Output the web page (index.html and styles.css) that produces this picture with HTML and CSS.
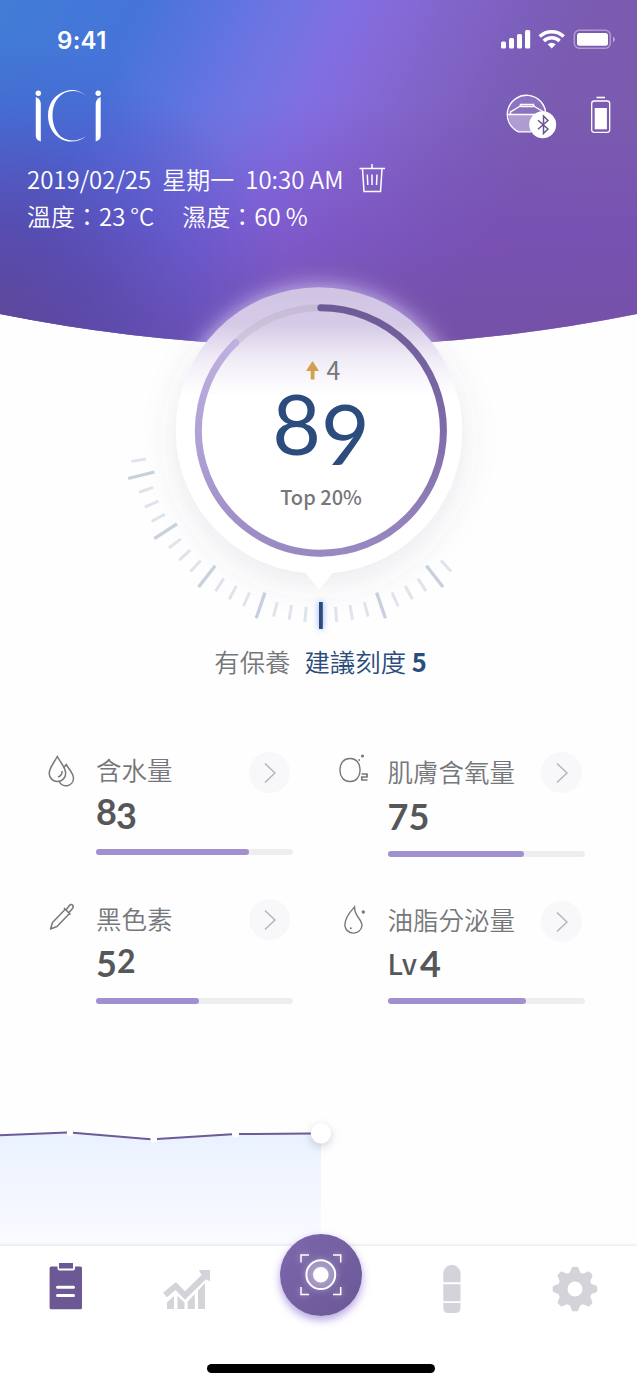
FILE: index.html
```html
<!DOCTYPE html>
<html lang="zh-Hant">
<head>
<meta charset="utf-8">
<title>iCi</title>
<link rel="stylesheet" href="styles.css">
</head>
<body>
<header class="hero">
  <div class="status">
    <span class="clock">9:41</span>
    <svg class="status-icons" width="116" height="22" viewBox="500 28 116 22">
      <g fill="#fff">
        <rect x="501" y="41.5" width="5" height="7" rx="1.5"/><rect x="509" y="38" width="5" height="10.500" rx="1.500"/><rect x="517" y="34" width="5" height="14.500" rx="1.500"/><rect x="525" y="30" width="5.200" height="18.500" rx="1.500"/>
        <path d="M551.700 48.500L547.700 44.300A5.800 5.800 0 0 1 555.700 44.300Z"/>
      </g>
      <g fill="none" stroke="#fff" stroke-width="3.500">
        <path d="M539.700 36.500A17.300 17.300 0 0 1 563.700 36.500M543.800 40.900A11.300 11.300 0 0 1 559.600 40.900"/>
      </g>
      <rect x="574.300" y="30.300" width="36" height="18" rx="5" fill="none" stroke="#fff" stroke-opacity=".4" stroke-width="1.500"/>
      <rect x="577" y="33" width="31" height="12.800" rx="2.500" fill="#fff"/>
      <path d="M613 36.500Q614.800 37.500 614.800 39.300T613 42.200Z" fill="#fff" fill-opacity=".5"/>
    </svg>
  </div>
  <div class="brand">
    <svg class="logo" width="68" height="54" viewBox="34 89 68 54">
      <g fill="#fff">
        <circle cx="38.300" cy="93.200" r="2.700"/><circle cx="98.200" cy="93.200" r="2.700"/>
        <path d="M35.800 97Q40.800 99 40.800 104V141.500Q35.800 140 35.800 136Z"/>
        <path d="M100.700 97Q95.700 99 95.700 104V141.500Q100.700 140 100.700 136Z"/>
        <path d="M86.500 96C79 89.500 71 89 66 91C54.500 94 48 104 48 115.500C48 127 54.500 138 66 141C73 142.500 80.500 141 86.300 136C80 140.200 74 141.200 67.500 139.800C58 137.500 52.500 127 52.500 115.500C52.500 104 58 94.500 67.500 91.800C74 90 80.500 91.500 86.500 96Z"/>
      </g>
    </svg>
    <svg class="device" width="106" height="46" viewBox="505 94 106 46">
      <path d="M508.500 114.500H544V132H518Q509 126 508.500 114.500Z" fill="#fff" fill-opacity=".4"/>
      <path d="M508 114A18.500 18.500 0 0 1 545 114Z" fill="#fff" fill-opacity=".14"/>
      <g fill="none" stroke="#fff" stroke-width="1.400">
        <path d="M531 131.900H518.500A19.200 19.200 0 1 1 545.700 113.500"/>
        <path d="M507.500 114.500H535M510.500 114V112L519.500 106.500Q520.500 106 520.500 104.500H533.500Q533.500 106 534.500 106.500L543.500 112M520.500 106.500H533.500"/>
      </g>
      <circle cx="542.700" cy="124.800" r="13.500" fill="#fff"/>
      <path d="M538 120.200L548 129L543.500 133.500V116L548 120.500L538 129.300" fill="none" stroke="#67558f" stroke-width="1.500"/>
      <path d="M596.500 97.500H605" stroke="#fff" stroke-width="1.600"/>
      <rect x="591.700" y="101" width="18" height="31.300" rx="2.500" fill="none" stroke="#fff" stroke-width="1.300"/>
      <rect x="594.700" y="108" width="12.200" height="21.300" fill="#fff"/>
    </svg>
  </div>
  <div class="info">
    <span>2019/02/25</span><span class="day">星期一</span><span class="hour">10:30 AM</span>
    <svg class="trash" width="28" height="30" viewBox="358 163 28 30" fill="none" stroke="#fff" stroke-width="1.500">
      <path d="M359.500 168.500H385M372 164V168M362.500 169L364 191.500H380.500L382 169M367.300 174.500L367.800 185M372 174.500V185M377 174.500L376.500 185"/>
    </svg>
  </div>
  <div class="info climate"><span>溫度：23<i class="thin"></i>°C</span><span class="humid">濕度：60<i class="thin"></i>%</span></div>
</header>

<main>
<section class="gauge">
  <svg class="dial" width="637" height="380" viewBox="0 260 637 380">
    <defs>
      <linearGradient id="face" gradientUnits="userSpaceOnUse" x1="0" y1="287" x2="0" y2="395">
        <stop offset="0" stop-color="#d0c3e3"/><stop offset=".35" stop-color="#d5cbe7"/><stop offset=".68" stop-color="#f1edf7"/><stop offset="1" stop-color="#fff"/>
      </linearGradient>
      <linearGradient id="right" gradientUnits="userSpaceOnUse" x1="0" y1="308" x2="0" y2="553">
        <stop offset="0" stop-color="#6d5b98"/><stop offset=".5" stop-color="#7f6ba9"/><stop offset="1" stop-color="#9a89c1"/>
      </linearGradient>
      <linearGradient id="left" gradientUnits="userSpaceOnUse" x1="0" y1="340" x2="0" y2="553">
        <stop offset="0" stop-color="#beb0e0"/><stop offset=".5" stop-color="#afa0d5"/><stop offset="1" stop-color="#9a89c1"/>
      </linearGradient>
      <linearGradient id="track" gradientUnits="userSpaceOnUse" x1="0" y1="304" x2="0" y2="345">
        <stop offset="0" stop-color="#c5bad7"/><stop offset="1" stop-color="#d0cadb"/>
      </linearGradient>
      <filter id="soft" x="-40%" y="-40%" width="180%" height="180%"><feGaussianBlur stdDeviation="17"/></filter>
      <filter id="halo" x="-40%" y="-40%" width="180%" height="180%"><feGaussianBlur stdDeviation="11"/></filter>
      <clipPath id="above"><path d="M0 260H637V314Q318.500 378 0 314Z"/></clipPath>
      <g id="minor"><path d="M320.800 607.500V622.500" stroke="#dfe4ec" stroke-width="3"/></g>
      <g id="major"><path d="M320.800 602V629" stroke="#c7d0dd" stroke-width="3.300"/></g>
      <g id="three"><use href="#minor" transform="rotate(4.750 320.800 430.500)"/><use href="#minor" transform="rotate(9.500 320.800 430.500)"/><use href="#minor" transform="rotate(14.250 320.800 430.500)"/></g>
    </defs>
    <circle cx="319" cy="440" r="143" fill="#555a80" fill-opacity=".12" filter="url(#soft)"/>
    <g clip-path="url(#above)"><circle cx="319" cy="430.500" r="145" fill="#e2d4ff" fill-opacity=".75" filter="url(#halo)"/></g>
    <path d="M303 570H335L319.300 590Z" fill="#fff"/>
    <circle cx="319" cy="430.500" r="143.300" fill="url(#face)"/>
    <g fill="none" stroke-width="7">
      <path d="M235.700 342.400A122.500 122.500 0 0 1 320.800 307.800" stroke="url(#track)"/>
      <path d="M320.800 307.800A122.700 122.700 0 0 1 320.800 553.200" stroke="url(#right)" stroke-linecap="round"/>
      <path d="M321.300 553.200A122.700 122.700 0 0 1 235.700 342.400" stroke="url(#left)"/>
    </g>
    <circle cx="235.700" cy="342.400" r="3.500" fill="#beb0e0"/>
    <use href="#three" transform="rotate(-38 320.800 430.500)"/>
    <use href="#three" transform="rotate(-19 320.800 430.500)"/>
    <use href="#three"/>
    <use href="#three" transform="rotate(19 320.800 430.500)"/>
    <use href="#three" transform="rotate(38 320.800 430.500)"/>
    <use href="#three" transform="rotate(57 320.800 430.500)"/>
    <use href="#minor" transform="rotate(-42.750 320.800 430.500)"/>
    <use href="#major" transform="rotate(-38 320.800 430.500)"/>
    <use href="#major" transform="rotate(-19 320.800 430.500)"/>
    <use href="#major" transform="rotate(19 320.800 430.500)"/>
    <use href="#major" transform="rotate(38 320.800 430.500)"/>
    <use href="#major" transform="rotate(57 320.800 430.500)"/>
    <use href="#major" transform="rotate(76 320.800 430.500)"/>
    <use href="#minor" transform="rotate(80.750 320.800 430.500)"/>
    <rect class="mark" x="319" y="602" width="3.800" height="27" fill="#2a4b7c"/>
  </svg>
  <div class="score">
    <div class="delta">
      <svg width="13" height="19" viewBox="0 0 13 19"><path d="M6.500 0L13 10H8.500V18.500H4.700V10H0Z" fill="#d0a04f"/></svg>
      <span>4</span>
    </div>
    <div class="total"><span>8</span><span class="drop">9</span></div>
    <div class="rank">Top 20%</div>
  </div>
</section>

<p class="advice"><span>有保養</span><span class="tip">建議刻度 <b>5</b></span></p>

<section class="metrics">
  <article class="metric">
    <svg class="icon" width="28" height="34" viewBox="48 754 28 34" fill="none" stroke="#77787b" stroke-width="1.500">
      <path d="M57.300 756.500C61 763 65.700 768 65.700 773.300A8.200 8.200 0 0 1 49.200 773.300C49.200 768 53.800 763 57.300 756.500Z"/>
      <path d="M64 767.500L66.200 764.500C69.500 770 73.500 773.500 73.500 778.300A7.500 7.500 0 0 1 59 781M62.200 771C62.200 774.500 60.500 776.200 58 777"/>
    </svg>
    <div class="body">
      <div class="head"><h2>含水量</h2><button class="go"><svg width="12" height="22" viewBox="0 0 12 22"><path d="M1 1.500L11 11L1 20.500"/></svg></button></div>
      <div class="value v83"><span>8</span><span class="low">3</span></div>
      <div class="bar"><div class="fill" style="width:77.600%"></div></div>
    </div>
  </article>
  <article class="metric right">
    <svg class="icon wide" width="32" height="34" viewBox="338 752 32 34" fill="none" stroke="#77787b" stroke-width="1.400">
      <rect x="340" y="758.500" width="20" height="23" rx="9.500" ry="10.500"/>
      <path d="M361.500 774H367V777H361.800V780H367.500" stroke-width="1.700"/>
      <circle cx="362.500" cy="756" r="1.600" fill="#77787b" stroke="none"/><circle cx="359.200" cy="760" r=".9" fill="#77787b" stroke="none"/>
    </svg>
    <div class="body">
      <div class="head"><h2>肌膚含氧量</h2><button class="go"><svg width="12" height="22" viewBox="0 0 12 22"><path d="M1 1.500L11 11L1 20.500"/></svg></button></div>
      <div class="value v75"><span>7</span><span>5</span></div>
      <div class="bar"><div class="fill" style="width:69%"></div></div>
    </div>
  </article>
  <article class="metric second">
    <svg class="icon" width="28" height="34" viewBox="48 900 28 34" fill="none" stroke="#77787b" stroke-width="1.500" stroke-linejoin="round">
      <path d="M65 909.500L52.500 922.500L50.500 929L57 926.500L69.500 913.500M64 908L70.500 914.500M66 910L69 906Q71 903.500 72.500 905T72.500 908.500L69 912.500"/>
    </svg>
    <div class="body">
      <div class="head"><h2>黑色素</h2><button class="go"><svg width="12" height="22" viewBox="0 0 12 22"><path d="M1 1.500L11 11L1 20.500"/></svg></button></div>
      <div class="value v52"><span>5</span><span class="small">2</span></div>
      <div class="bar"><div class="fill" style="width:52.500%"></div></div>
    </div>
  </article>
  <article class="metric right second">
    <svg class="icon wide" width="32" height="34" viewBox="338 902 32 34" fill="none" stroke="#77787b" stroke-width="1.400">
      <path d="M354.500 906C353 908 344.800 915 344.800 924.500A8.700 8.700 0 0 0 362 925C362 917.500 354.500 916 354.500 906Z"/>
      <circle cx="363.300" cy="911" r="1.700" fill="#77787b" stroke="none"/><circle cx="350.800" cy="927.300" r="1" fill="#77787b" stroke="none"/>
    </svg>
    <div class="body">
      <div class="head"><h2>油脂分泌量</h2><button class="go"><svg width="12" height="22" viewBox="0 0 12 22"><path d="M1 1.500L11 11L1 20.500"/></svg></button></div>
      <div class="value v4"><span class="lv">Lv</span><span>4</span></div>
      <div class="bar"><div class="fill" style="width:70%"></div></div>
    </div>
  </article>
</section>

<svg class="trend" width="637" height="135" viewBox="0 1111 637 135">
  <defs><linearGradient id="area" x1="0" y1="0" x2="0" y2="1"><stop offset="0" stop-color="#eaf1ff"/><stop offset="1" stop-color="#fafbff"/></linearGradient></defs>
  <path d="M0 1135L70 1132.300L153 1139L235 1134L321 1133V1246H0Z" fill="url(#area)"/>
  <g fill="#fff"><circle cx="70" cy="1133" r="3.500"/><circle cx="153.500" cy="1139" r="3.500"/><circle cx="235.500" cy="1134" r="3.500"/></g>
  <path d="M0 1135.300L67 1132.400M73 1132.700L150.500 1139.200M157 1139L232 1134.200M239 1134L312 1133.500" stroke="#6d5a98" stroke-width="2" fill="none"/>
  <circle class="point" cx="321" cy="1133.300" r="10.200" fill="#fff"/>
</svg>
</main>

<nav class="tabs">
  <svg class="tab report" width="34" height="48" viewBox="49 1262 34 48">
    <rect x="49.600" y="1266.500" width="32.400" height="42.700" rx="1.500" fill="#6b5895"/>
    <path d="M57.500 1263H75V1268.500Q75 1270.500 73 1270.500H59.500Q57.500 1270.500 57.500 1268.500Z" fill="#fff"/>
    <rect x="59" y="1263" width="14" height="5.500" fill="#6b5895"/>
    <path d="M57.500 1287.200H73.500M57.500 1295.500H73.500" stroke="#fff" stroke-width="3" stroke-linecap="round"/>
  </svg>
  <svg class="tab stats" width="48" height="42" viewBox="163 1269 48 42" fill="#d4d3d9">
    <path d="M167 1309V1302.500L174 1296V1309ZM177.500 1309V1296L184.500 1302.500V1309ZM187.700 1309V1301.500L194.800 1294V1309ZM198 1309V1290.500L205 1283V1309Z"/>
    <path d="M165 1295L175.700 1286L185 1295.500L206 1275" fill="none" stroke="#d4d3d9" stroke-width="6"/>
    <path d="M199 1270H210V1281.500L206.500 1279.500L200.500 1273.500Z"/>
  </svg>
  <button class="scan">
    <svg width="42" height="42" viewBox="0 0 42 42" fill="none" stroke="#fff" stroke-width="1.500">
      <circle cx="20.800" cy="20.700" r="14.400" fill="#fff" fill-opacity=".18" stroke-width="2"/><circle cx="20.800" cy="20.700" r="7" fill="#fff"/>
      <path d="M1 8.500V.9H9M33 .9H40.700V8.500M40.700 33V40.600H33M9 40.600H1V33"/>
    </svg>
  </button>
  <svg class="tab stick" width="18" height="48" viewBox="0 0 18 48" fill="#d4d3d9"><path d="M.3 17.300V8.500A8.600 8.600 0 0 1 17.500 8.500V17.300ZM.3 19.200H17.500V36.200H.3ZM.3 38H17.500V43Q17.500 48 12.500 48H5.300Q.3 48 .3 43Z"/></svg>
  <svg class="tab gear" width="46" height="46" viewBox="-23 -23 46 46">
    <g fill="#d4d3d9">
      <path fill-rule="evenodd" d="M0-17A17 17 0 1 0 0 17A17 17 0 1 0 0-17ZM0-7.500A7.500 7.500 0 1 1 0 7.500A7.500 7.500 0 1 1 0-7.500Z"/>
      <g id="teeth"><path d="M-7.500-14.500Q-5-15.500-4-19.500Q-3.200-22.300-2-22.300H2Q3.200-22.300 4-19.500Q5-15.500 7.500-14.500ZM-7.500 14.500Q-5 15.500-4 19.500Q-3.200 22.300-2 22.300H2Q3.200 22.300 4 19.500Q5 15.500 7.500 14.500Z"/></g>
      <use href="#teeth" transform="rotate(45)"/><use href="#teeth" transform="rotate(90)"/><use href="#teeth" transform="rotate(135)"/>
    </g>
  </svg>
  <div class="home"></div>
</nav>
</body>
</html>
```

FILE: styles.css
```css
* { box-sizing: border-box; }

body {
  margin: 0;
  width: 637px;
  height: 1382px;
  overflow: hidden;
  background: #fefefe;
  font-family: "Noto Sans CJK TC", sans-serif;
  color: #76777a;
}

svg { display: block; flex: none; }
button { border: 0; padding: 0; }

.hero {
  height: 346px;
  color: #fff;
  clip-path: path("M0 0H637V314Q318.500 378 0 314Z");
  background:
    radial-gradient(ellipse 330px 310px at -30px 345px, rgba(94, 70, 146, .95), rgba(86, 68, 164, .72) 38%, rgba(76, 72, 190, .32) 70%, rgba(76, 72, 190, 0)),
    linear-gradient(180deg, rgba(118, 68, 184, 0) 30%, rgba(118, 68, 184, .42) 68%, rgba(116, 78, 164, .8) 100%),
    linear-gradient(115deg, #407cd6 0%, #4674d9 18%, #5d74df 28%, #7274e3 37%, #806fe2 44%, #8569d8 50%, #8265ca 57%, #7b5eb9 68%, #7a5bb0 76%, #7a5cac 100%);
}

.status {
  display: flex;
  justify-content: space-between;
  padding: 28px 21px 0 57px;
  height: 88px;
}
.clock { font: 600 24px/25px Inter, sans-serif; letter-spacing: .3px; }

.brand { display: flex; justify-content: space-between; height: 74px; padding: 1px 26px 0 34px; }
.device { margin-top: 5px; }

.info { display: flex; height: 34px; padding-left: 27px; font-size: 24px; line-height: 34px; font-weight: 350; }
.day { margin-left: 11px; }
.hour { margin-left: 11px; }
.trash { margin: 1px 0 0 14px; }
.climate { margin-top: 3px; }
.humid { margin-left: 28px; }
.thin { display: inline-block; width: 5px; }

.gauge { display: grid; height: 380px; margin-top: -86px; position: relative; }
.dial, .score { grid-area: 1 / 1; }
.mark { filter: drop-shadow(0 0 3px rgba(100, 140, 255, .8)); }
.score { display: flex; flex-direction: column; align-items: center; padding: 95px 0 0 5px; }
.delta { display: flex; align-items: center; gap: 8px; height: 28px; padding-left: 4px; font-size: 25px; line-height: 28px; font-weight: 400; }
.delta svg { margin-top: 2px; }
.total { display: flex; margin-top: 8px; height: 89px; font: 400 84px/64px Lato, sans-serif; color: #2b4c7c; }
.drop { margin-top: 10px; }
.rank { margin-top: 2px; font-size: 20px; line-height: 30px; font-weight: 500; }

.advice { display: flex; justify-content: center; gap: 14px; margin: 2px 0 0 4px; height: 38px; font-size: 25.400px; line-height: 38px; font-weight: 350; }
.tip { color: #2b4c7c; }

.metrics { display: grid; grid-template-columns: 293px 292px; height: 361px; margin-top: 72px; grid-template-rows: 147px 147px; }
.metric { display: flex; }
.icon { margin: 2px 20px 0 48px; }
.wide { margin: 0 17.500px 0 45px; }
.second .icon { margin-top: 1px; }
.second .wide { margin-top: 4px; }
.body { flex: 1; }
.head { display: flex; justify-content: space-between; height: 41px; }
h2 { margin: 0; font-size: 25.500px; line-height: 34px; font-weight: 350; }
.second h2 { padding-top: 2px; }
.right h2 { padding-top: 2px; }
.right.second h2 { padding-top: 3px; }
.go { display: grid; place-items: center; width: 41px; height: 41px; margin-right: 3px; border-radius: 50%; background: #f8f8fb; }
.second.right .go { margin-top: 2px; }
.go path { fill: none; stroke: #b5b5b8; stroke-width: 1.500; }
.value { display: flex; height: 56px; font: 700 36px/42px Lato, sans-serif; color: #565759; }
.v83 { margin-top: -3px; height: 59px; }
.v75 { padding-top: 2px; height: 58px; }
.v52 { padding-top: 2px; height: 58px; }
.v4 { padding-top: 2px; height: 58px; }
.low { margin: 4px 0 0 -1px; }
.small { font-size: 32px; line-height: 38px; }
.lv { margin-right: 3px; font: 500 28px/42px "Noto Sans CJK TC", sans-serif; }
.bar { height: 5.500px; border-radius: 3px; background: #eeeef0; }
.fill { height: 100%; border-radius: 3px; background: #a18fd0; }

.trend { overflow: visible; margin-top: -2px; }
.point { filter: drop-shadow(0 3px 4px rgba(80, 80, 110, .25)); }

.tabs { position: relative; height: 137px; display: flex; background: #fff; box-shadow: 0 -1px 3px rgba(60, 60, 90, .12); }
.report { margin: 16px 0 0 49px; }
.stats { margin: 23px 0 0 80px; }
.scan { display: grid; place-items: center; width: 82px; height: 82px; margin: -12px 0 0 69px; border-radius: 50%; background: linear-gradient(135deg, #7e67af, #6a5894); box-shadow: 0 4px 9px rgba(120, 85, 205, .55); }
.scan svg { filter: drop-shadow(0 0 3px rgba(255, 255, 255, .5)); }
.stick { margin: 19px 0 0 81px; }
.gear { margin: 20px 0 0 91px; }
.home { position: absolute; left: 207px; top: 118px; width: 228px; height: 9px; border-radius: 5px; background: #000; }
```
